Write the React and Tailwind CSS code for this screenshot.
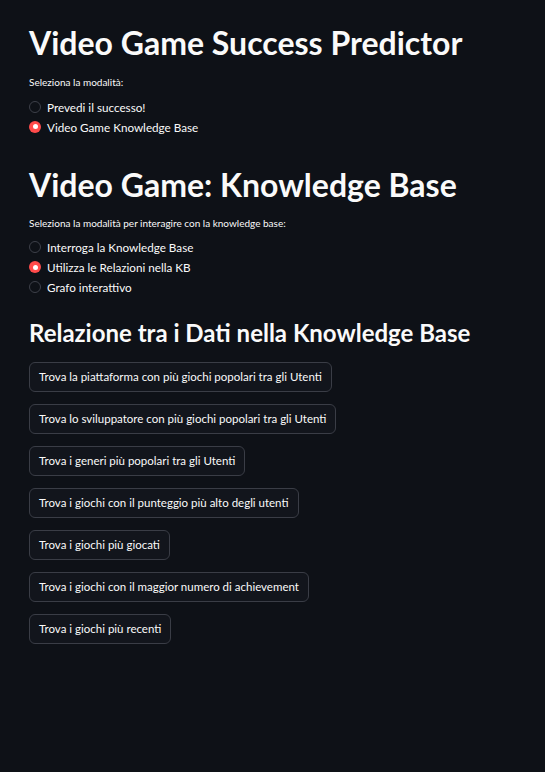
import { useState } from 'react';

const MODES = ['Prevedi il successo!', 'Video Game Knowledge Base'];
const KB_MODES = ['Interroga la Knowledge Base', 'Utilizza le Relazioni nella KB', 'Grafo interattivo'];
const QUERIES = [
  'Trova la piattaforma con più giochi popolari tra gli Utenti',
  'Trova lo sviluppatore con più giochi popolari tra gli Utenti',
  'Trova i generi più popolari tra gli Utenti',
  'Trova i giochi con il punteggio più alto degli utenti',
  'Trova i giochi più giocati',
  'Trova i giochi con il maggior numero di achievement',
  'Trova i giochi più recenti',
];

function RadioGroup({ label, options, value, onChange }) {
  return (
    <div className="flex flex-col">
      <p className="text-[10px] leading-[14px] mb-[8px]">{label}</p>
      <div className="flex flex-col gap-[0.5px]">
        {options.map((opt) => (
          <label key={opt} className="flex items-center gap-[6px] cursor-pointer h-[19.5px]" onClick={() => onChange(opt)}>
            {value === opt ? (
              <span className="h-[12px] w-[12px] rounded-full bg-[#ff4b4b] flex items-center justify-center">
                <span className="h-[5px] w-[5px] rounded-full bg-white" />
              </span>
            ) : (
              <span className="h-[12px] w-[12px] rounded-full border border-[#3d4049]" />
            )}
            <span className="text-[11.7px] leading-[14px]">{opt}</span>
          </label>
        ))}
      </div>
    </div>
  );
}

export default function App() {
  const [mode, setMode] = useState(MODES[1]);
  const [kbMode, setKbMode] = useState(KB_MODES[1]);

  return (
    <div className="min-h-[772px] bg-[#0e1117] text-[#fafafa] px-[29px] pt-[24px]" style={{ fontFamily: 'Lato, sans-serif' }}>
      <h1 className="text-[32px] leading-[38px] font-bold">Video Game Success Predictor</h1>
      <div className="mt-[13px]">
        <RadioGroup label="Seleziona la modalità:" options={MODES} value={mode} onChange={setMode} />
      </div>

      <h1 className="text-[32px] leading-[38px] font-bold mt-[29px]">Video Game: Knowledge Base</h1>
      <div className="mt-[12px]">
        <RadioGroup
          label="Seleziona la modalità per interagire con la knowledge base:"
          options={KB_MODES}
          value={kbMode}
          onChange={setKbMode}
        />
      </div>

      <h2 className="text-[24px] leading-[32px] font-bold mt-[20px]">Relazione tra i Dati nella Knowledge Base</h2>
      <div className="flex flex-col items-start gap-[12px] mt-[13px]">
        {QUERIES.map((q) => (
          <button
            key={q}
            className="h-[30px] px-[9px] rounded-[6px] border border-[#3a3d46] bg-[#12151c] text-[11.5px] hover:border-[#ff4b4b] hover:text-[#ff4b4b]"
          >
            {q}
          </button>
        ))}
      </div>
    </div>
  );
}
